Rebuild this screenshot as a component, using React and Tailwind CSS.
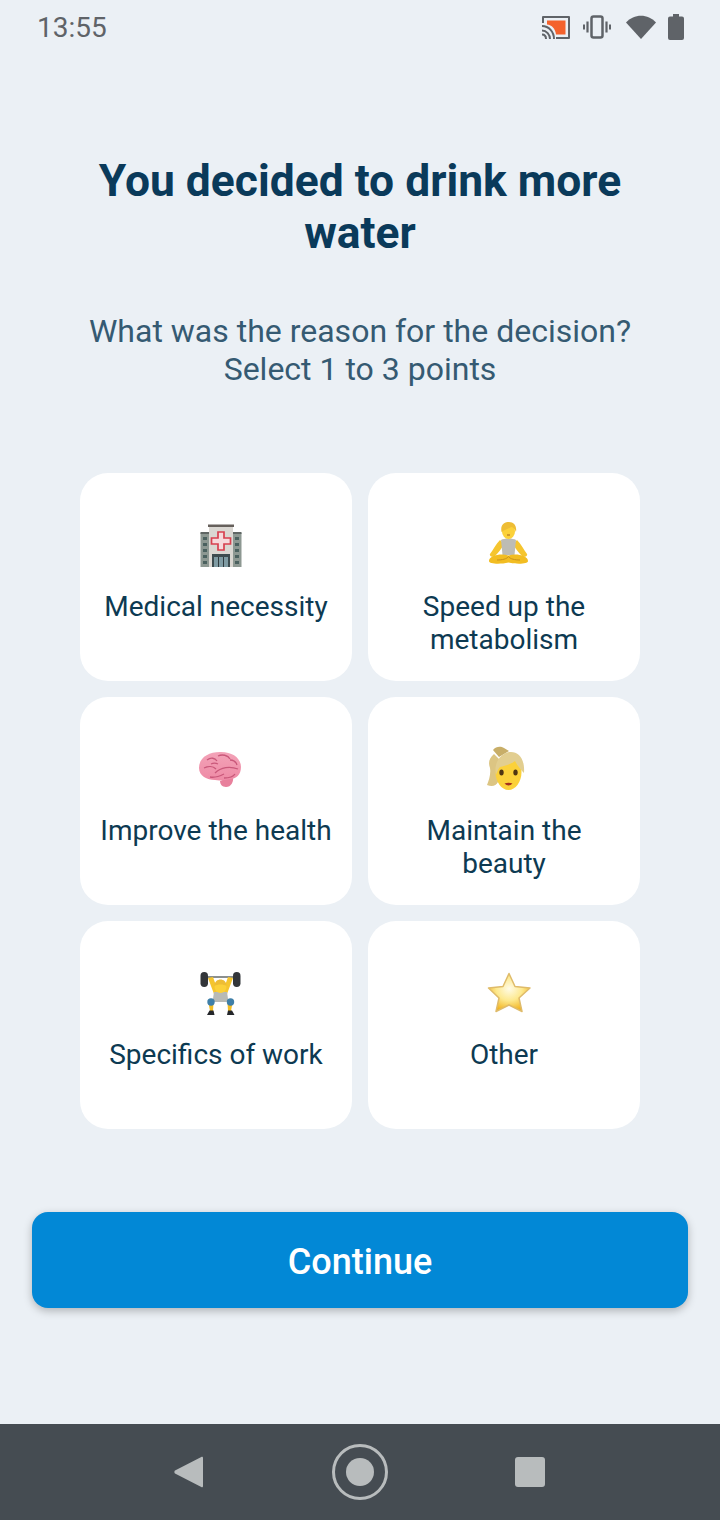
import React from "react";

const Hospital = () => (
  <svg width="48" height="48" viewBox="0 0 48 48">
    <rect x="3.500" y="12" width="9" height="34" fill="#8d9892" />
    <rect x="35.500" y="12" width="9" height="34" fill="#8d9892" />
    <rect x="3.500" y="11" width="9" height="2" fill="#5f6664" />
    <rect x="35.500" y="11" width="9" height="2" fill="#5f6664" />
    {[16, 22, 28, 34, 40].map((y) => (
      <g key={y} fill="#4b615f">
        <rect x="6" y={y} width="4" height="3" />
        <rect x="38" y={y} width="4" height="3" />
      </g>
    ))}
    <rect x="12" y="5" width="24" height="41" fill="#dad7d2" />
    <rect x="11" y="3.500" width="26" height="2.500" fill="#66605c" />
    <path d="M21 11h6v6h6.500v6H27v6h-6v-6h-6.500v-6H21z" fill="#f6d9dc" stroke="#d8404f" strokeWidth="1.700" />
    <rect x="15" y="33" width="18" height="13" fill="#3d4c50" />
    <path d="M17 36h14v10H17z" fill="#7f9ba3" />
    <path d="M21.500 36v10M26.500 36v10" stroke="#2f3b3f" strokeWidth="1" />
  </svg>
);

const Meditate = () => (
  <svg width="48" height="48" viewBox="0 0 48 48">
    <path d="M15 19c-4 4-7 10-10 14-1 2 3 4 5 2 3-3 7-8 9-12zM32 19c4 4 7 10 10 14 1 2-3 4-5 2-3-3-7-8-9-12z" fill="#f5c52f" />
    <path d="M16 19c3-2 12-2 15 0l-1.500 15h-12z" fill="#bdbcb4" />
    <ellipse cx="23.500" cy="10.500" rx="6.500" ry="7.500" fill="#fbd13a" />
    <path d="M16.500 11C15 3 20 1 24 1c5 0 8 4 7 10-1-3-3-5-5-5-2 2-6 2-9.500 5z" fill="#eebd35" />
    <path d="M22 14h3" stroke="#a8641d" strokeWidth="1" />
    <path d="M4 40c0-5 11-8 19.500-5.500C32 32 43 35 43 40c0 3-11 3.500-19.500 1.500C15 43.500 4 43 4 40z" fill="#f2bd22" />
    <path d="M12 39c5 0 10-1 11.500-3.500C25 38 30 39 35 39" stroke="#c9921a" strokeWidth="1" fill="none" />
  </svg>
);

const Brain = () => (
  <svg width="48" height="48" viewBox="0 0 48 48">
    <defs>
      <linearGradient id="brain" x1="0" y1="0" x2="0" y2="1">
        <stop offset="0%" stopColor="#f3a3b8" />
        <stop offset="100%" stopColor="#ee8aa5" />
      </linearGradient>
    </defs>
    <path d="M36 31c1 6-2 11-7 11-4 0-6-3-6-6z" fill="#e8809c" />
    <path d="M2 23C2 13 11 7 23 7c12-.5 21 6 21 15 0 8-5 12-11 12-5 1-10 2-15 1C10 35 2 31 2 23z" fill="url(#brain)" />
    <path d="M10 15c4-3 8-2 10 1M21 11c4-2 10-1 12 3M7 23c4-2 9-2 12 1M18 28c6-6 15-7 23-4M13 32c5 1 10-1 14-3M27 33c4 0 9-1 11-4M33 15c3 0 6 2 7 5M14 19c2-1 5-1 7 0" stroke="#c9587a" strokeWidth="1.300" fill="none" />
  </svg>
);

const Woman = () => (
  <svg width="48" height="48" viewBox="0 0 48 48">
    <path d="M9 9c-5 4-6 9-4 14 1 6-1 12-3 17 5 2 9 1 11-3l4-20z" fill="#dcc583" />
    <path d="M8 5c3-4 8-4 11-2l5 3-10 6z" fill="#c8ae68" />
    <path d="M10.500 27c0-9 5-13 13-13s13 4 13 13c0 10-6 18-13 18s-13-8-13-18z" fill="#fbd13a" />
    <path d="M11 30C8 17 17 7 26 7c8 0 14 7 13 21-3-3-7-8-9-12-5 4-11 5-15 6-2 2-3 5-4 8z" fill="#e2ce90" />
    <ellipse cx="16.500" cy="27.500" rx="2.200" ry="3" fill="#4f3512" />
    <ellipse cx="30.500" cy="27.500" rx="2.200" ry="3" fill="#4f3512" />
    <path d="M19.500 38.500c2.500-1 5.500-1 8 0-2.500 2.500-5.500 2.500-8 0z" fill="#a5301f" />
  </svg>
);

const Lifter = () => (
  <svg width="48" height="48" viewBox="0 0 48 48">
    <path d="M10 8h28" stroke="#8b8f8e" strokeWidth="2" />
    <rect x="3.500" y="3" width="7.500" height="15" rx="3.700" fill="#33363a" />
    <rect x="36" y="3" width="7.500" height="15" rx="3.700" fill="#33363a" />
    <path d="M11 9l6 16h5L16 8zM36 9l-6 16h-5L31 8z" fill="#f5c52f" />
    <path d="M17 23h13l1.500 10h-16z" fill="#b8bab6" />
    <circle cx="23.500" cy="18" r="6" fill="#fbd13a" />
    <path d="M17.500 17c0-4.500 3-6.500 6-6.500s6 2 6 6.500c-3-2-9-2-12 0z" fill="#eebd35" />
    <path d="M11.500 34h5l-.5 8h-3zM35.500 34h-5l.5 8h3z" fill="#f2bd22" />
    <circle cx="14" cy="33" r="3.700" fill="#3f7fa8" />
    <circle cx="33.500" cy="33" r="3.700" fill="#3f7fa8" />
    <path d="M10 46l2.500-4.500h4l1 4.500zM37.500 46L35 41.500h-4l-1 4.500z" fill="#24262a" />
  </svg>
);

const Star = () => (
  <svg width="48" height="48" viewBox="0 0 48 48">
    <defs>
      <radialGradient id="star" cx="50%" cy="40%" r="62%">
        <stop offset="0%" stopColor="#fffbe6" />
        <stop offset="50%" stopColor="#fde98f" />
        <stop offset="100%" stopColor="#f1ae14" />
      </radialGradient>
    </defs>
    <path
      d="M24 4.500l6 13 15 1.500-11 10 3 13.500L24 36l-13 6.500L14 29 3.500 19l14.500-1.500z"
      fill="url(#star)"
      stroke="#dfbb6a"
      strokeWidth="1.500"
      strokeLinejoin="round"
    />
  </svg>
);

const options = [
  { label: "Medical necessity", icon: <Hospital /> },
  { label: "Speed up the metabolism", icon: <Meditate /> },
  { label: "Improve the health", icon: <Brain /> },
  { label: "Maintain the beauty", icon: <Woman /> },
  { label: "Specifics of work", icon: <Lifter /> },
  { label: "Other", icon: <Star /> },
];

const StatusBar = () => (
  <div className="flex items-center justify-between h-[54px] pl-[37px] pr-9 text-[#5f6368]">
    <span className="text-[28px] leading-none pt-[2px]">13:55</span>
    <div className="flex items-center">
      {/* cast */}
      <svg width="28" height="23" viewBox="0 0 28 23" className="mr-[13px]">
        <path d="M1 0h26a1 1 0 0 1 1 1v21a1 1 0 0 1-1 1H14v-2h12V2H2v5H0V1a1 1 0 0 1 1-1z" fill="#5f6368" />
        <path d="M5 4.500h18.500v14H14C13 12.500 10 9 5 8.500z" fill="#f4622d" />
        <path d="M0 10c7 0 12 6 12 13M0 14.500c4.500 0 8 4 8 8.500M0 18.500c2.500 0 4 2 4 4.500" stroke="#5f6368" strokeWidth="2" fill="none" />
      </svg>
      {/* vibrate */}
      <svg width="28" height="24" viewBox="0 0 28 24" className="mr-[15px]">
        <rect x="8.500" y="1.500" width="11" height="21" rx="2" fill="none" stroke="#5f6368" strokeWidth="2.500" />
        <path d="M4.500 6.500v11M23.500 6.500v11" stroke="#5f6368" strokeWidth="2.200" />
        <path d="M1 9.500v5M27 9.500v5" stroke="#5f6368" strokeWidth="2" />
      </svg>
      {/* wifi */}
      <svg width="30" height="26" viewBox="0 0 30 26" className="mr-3">
        <path d="M0 8.500C8-.5 22-.5 30 8.500L15 25z" fill="#5f6368" />
      </svg>
      {/* battery */}
      <svg width="16" height="26" viewBox="0 0 16 26">
        <path d="M5 0h6v2.500h3a2 2 0 0 1 2 2V24a2 2 0 0 1-2 2H2a2 2 0 0 1-2-2V4.500a2 2 0 0 1 2-2h3z" fill="#5f6368" />
      </svg>
    </div>
  </div>
);

const NavBar = () => (
  <div className="h-24 bg-[#454c52] flex items-center justify-center gap-32">
    <svg width="30" height="32" viewBox="0 0 30 32">
      <path d="M29 2v28c0 1.200-.8 1.700-1.700 1.100L1 17.500c-.8-.5-.8-2.500 0-3L27.300.900C28.200.300 29 .800 29 2z" fill="#b8bcbd" />
    </svg>
    <div className="w-14 h-14 rounded-full border-[3px] border-[#b8bcbd] flex items-center justify-center">
      <div className="w-7 h-7 rounded-full bg-[#b8bcbd]" />
    </div>
    <div className="w-[30px] h-[30px] -ml-[1px] mr-[1px] rounded-[3px] bg-[#b8bcbd]" />
  </div>
);

export default function App() {
  return (
    <div className="w-[720px] h-[1520px] bg-[#ebf0f5] flex flex-col font-['Roboto',sans-serif]">
      <StatusBar />

      <h1 className="mt-[101px] px-20 text-center text-[44.400px] leading-[52px] font-bold text-[#0a3a5a]">
        You decided to drink more water
      </h1>
      <p className="mt-[53px] text-center text-[32px] leading-[38px] text-[#355a72]">
        What was the reason for the decision?
        <br />
        Select 1 to 3 points
      </p>

      <div className="mt-[85px] mx-20 grid grid-cols-2 gap-4">
        {options.map((opt) => (
          <div key={opt.label} className="h-[208px] bg-white rounded-[28px] flex flex-col items-center pt-12 px-4">
            <div className="h-12 w-12 ml-[9px] shrink-0">{opt.icon}</div>
            <div className="mt-[21px] text-center text-[28px] leading-[33px] text-[#0d3a52]">{opt.label}</div>
          </div>
        ))}
      </div>

      <button className="mt-[83px] mx-8 h-24 pt-1 rounded-2xl bg-[#0288d6] text-white text-[36px] font-medium shadow-[0_3px_8px_rgba(0,0,0,0.25)]">
        Continue
      </button>

      <div className="mt-auto">
        <NavBar />
      </div>
    </div>
  );
}
